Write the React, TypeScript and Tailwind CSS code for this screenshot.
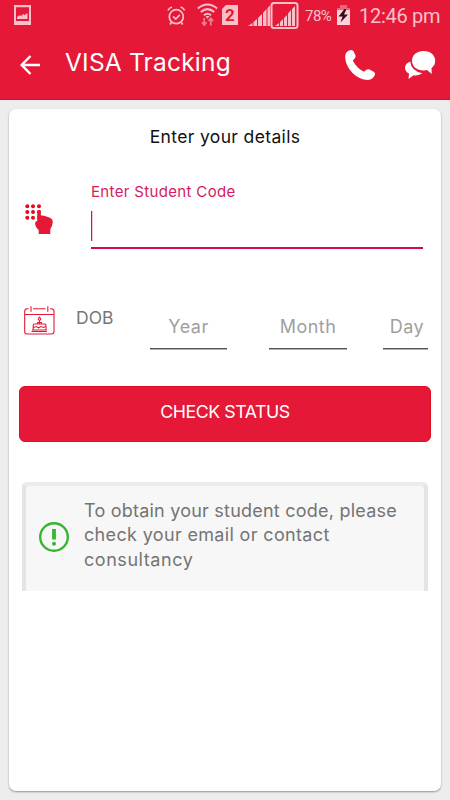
import React from "react";

function StatusBar() {
  return (
    <div className="flex h-8 items-center pl-[14px] text-[#fac0ca] font-[Roboto,sans-serif]">
      <svg className="mt-[-2px] h-5 w-[17px] shrink-0" viewBox="0 0 17 20" fill="currentColor">
        <path fillRule="evenodd" d="M0 0H17V20H0zM2 2.3V16H15V2.3z" />
        <path d="M3 14V12L5.5 10.3L7 11L9.3 9L10.5 10L13.5 8V14z" />
      </svg>
      <svg className="ml-[136px] mt-[-1px] h-[20px] w-[19px] shrink-0" viewBox="0 0 19 20" fill="none" stroke="currentColor" strokeWidth="1.7">
        <circle cx="9.3" cy="10.7" r="7" />
        <path d="M1 4.3Q2.2 1.8 5 1M17.6 4.3Q16.4 1.8 13.6 1M6 10.3L8.7 13L12.8 8.8M4.5 16L3 18.5M14.1 16L15.6 18.5" />
      </svg>
      <svg className="ml-[11px] mt-[-4px] h-[23px] w-[22px] shrink-0" viewBox="0 0 22 23" fill="none" stroke="currentColor" strokeWidth="2">
        <path d="M.8 5.5Q10.5 -2.5 20.2 5.5M3.8 9Q10.5 3.2 17.2 9M7 12.3Q10.5 9.2 14 12.3" />
        <path d="M8.5 13H12.5L10.5 15.8z" fill="currentColor" stroke="none" />
        <path stroke="#f27f90" strokeWidth="1.7" d="M7.2 15V21.5M4.8 19.3L7.2 22L9.5 19.3M13.8 22.5V15.5M11.5 18L13.8 15.3L16.2 18" />
      </svg>
      <div className="ml-[3px] mt-[-2px] flex h-[20px] w-[16px] shrink-0 items-center justify-center bg-[#fac0ca] text-[17px] font-bold leading-none text-[#e51937] [clip-path:polygon(25%_0,100%_0,100%_100%,0_100%,0_20%)]">2</div>
      <svg className="ml-[10px] mt-[-3px] h-[28px] w-[51px] shrink-0" viewBox="0 0 51 28" fill="currentColor">
        <path d="M0 25L4.5 22V25zM5.5 21L9 18V25H5.5zM10 17L14 13V25H10zM15 12L18.5 8V25H15zM19.5 7L22 4.5V25H19.5z" />
        <path d="M27 25L31 22V25zM32 21L35 18V25H32zM36 17L39 14V25H36zM40 12.5L43 9V25H40zM44 8L47 5V25H44z" />
        <rect x="23.5" y="2" width="26" height="25" rx="2.5" fill="none" stroke="currentColor" strokeWidth="2" />
      </svg>
      <span className="ml-[6px] w-[30px] whitespace-nowrap text-[15px] tracking-[-0.5px]">78%</span>
      <svg className="ml-[2px] mt-[-3px] h-[20px] w-[13px] shrink-0" viewBox="0 0 13 20">
        <path d="M3 0H10V3H13V20H0V3H3z" fill="#f0647a" />
        <path d="M0 5H13V20H0z" fill="#fbd2d9" />
        <path d="M7.5 4L1.5 11.5H5.5L3.5 17.5L11 9.5H7L9.5 4z" fill="#3d0c17" />
      </svg>
      <span className="ml-[9px] whitespace-nowrap text-[20px] tracking-[-0.28px]">12:46 pm</span>
    </div>
  );
}

function AppBar() {
  return (
    <header className="flex h-[65px] items-center pl-5 text-white">
      <svg className="h-5 w-5 shrink-0" viewBox="0 0 20 20" fill="none" stroke="currentColor" strokeWidth="2.4">
        <path d="M20 10H2M10.5 1L1.7 10L10.5 19" />
      </svg>
      <h1 className="-mt-1 ml-[25px] w-[255px] whitespace-nowrap text-[24.5px] tracking-[0.2px]">VISA Tracking</h1>
      <svg className="ml-[25px] h-[30px] w-[30px] shrink-0" viewBox="0 0 30 30" fill="currentColor">
        <path d="M1 3Q3 .2 6 0Q8 0 8.7 1.5L10.5 5.5Q11 7.5 9.2 9L7.8 10.6Q9.8 14.8 12.8 17.5Q15.6 20.3 19.2 21.7L21 19.9Q22.7 18.6 24.5 19.6L29 22Q30.5 23 29.8 25Q28 29.6 23 30Q14 29.5 7.5 23Q.4 15.5 .2 7.5Q.1 5 1 3z" />
      </svg>
      <svg className="ml-[30px] h-[28px] w-[31px] shrink-0" viewBox="0 0 31 28" fill="currentColor">
        <path d="M5.2 10.5Q6 20 17.5 22.3Q13.5 25 8.5 24.2L3.5 28L4 22.6Q0 20.5 0 16.5Q.2 12.5 5.2 10.5z" />
        <path d="M18.7 0C25.5 0 30.2 4.2 30.2 9.8Q30.2 14.1 26.5 17.1L26.7 23L22 19.1Q20.5 19.5 18.7 19.5C11.5 19.5 7 15.3 7 9.8S11.5 0 18.7 0z" />
      </svg>
    </header>
  );
}

function KeypadIcon() {
  return (
    <svg className="h-[30px] w-[28px] shrink-0" viewBox="0 0 28 30" fill="#e51937">
      {[2.3, 8, 13.8].map((y) => [2.3, 8, 14].map((x) => (
        <circle key={`${x}-${y}`} cx={x} cy={y} r="2" fill="#e30b1c" />
      )))}
      <path d="M12.3 7.2Q12.5 6 14 6T15.8 7.2V11.2L20 12.1L25.5 14Q28 15.3 27.8 18Q27.5 22 25.3 25.2V30H13.7V26.2Q10.2 23 10 19.8Q10 17.3 12.3 16.8z" />
    </svg>
  );
}

function CakeCalendarIcon() {
  return (
    <svg className="h-[29px] w-[31px] shrink-0" viewBox="0 0 31 29" fill="none" stroke="#e51937" strokeWidth="1.1">
      <path d="M4.5 2.7H3Q.7 3 .7 5.3V25.5Q.7 28 3 28H27.5Q30 28 30 25.5V5.3Q30 3 27.5 2.7H26M9 2.7H21.5M.7 8.5H30M7 .3V5.8M23.8 .3V5.8" />
      <path d="M7.5 25.5H23M9.2 24V19.5Q9.2 18 10.5 18H20.5Q22 18 22 19.5V24M9.5 21.5L12 20.5L14.5 21.8L17 20.5L19.5 21.5L21.8 20.5M8 24H22.8M15.5 18V14.5M13.7 18V16.5H17.4V18M15.5 11.2Q13 14 15.5 14.2Q18 14 15.5 11.2z" />
    </svg>
  );
}

function DateField({ label, className }: { label: string; className: string }) {
  return (
    <div className={`flex h-[43px] justify-center border-b border-[#555] pt-[9px] text-[18px] leading-6 tracking-[0.5px] text-[#a0a0a0] shadow-[0_1px_0_#b0b0b0] ${className}`}>{label}</div>
  );
}

export default function App() {
  return (
    <div className="flex h-[800px] w-[450px] flex-col overflow-hidden bg-[#ededed] font-[Inter,sans-serif]">
      <div className="h-[100px] shrink-0 border-b border-[#d80f20] bg-[#e51937]">
        <StatusBar />
        <AppBar />
      </div>
      <main className="mx-[9px] mt-[9px] h-[682px] rounded-[7px] bg-white shadow-[0_1px_2px_rgba(0,0,0,0.38)]">
        <h2 className="pt-4 text-center text-[17.5px] leading-6 tracking-[0.36px] text-[#111]">Enter your details</h2>
        <div className="mt-[21px] flex">
          <div className="ml-4 w-[66px] pt-[34px]"><KeypadIcon /></div>
          <div className="h-[79px] w-[332px] border-b-2 border-[#cf0850] pt-[10px]">
            <div className="whitespace-nowrap text-[15px] leading-6 tracking-[0.34px] text-[#d51a62]">Enter Student Code</div>
            <div className="mt-[7px] h-[30px] w-px bg-[#cf1846] shadow-[1px_0_0_#f5c6d2]" />
          </div>
        </div>
        <div className="mt-[57px] flex text-[17.5px]">
          <div className="ml-[15px] w-[52px]"><CakeCalendarIcon /></div>
          <div className="w-[74px] leading-6 text-[#777]">DOB</div>
          <DateField label="Year" className="w-[77px]" />
          <DateField label="Month" className="ml-[42px] w-[78px]" />
          <DateField label="Day" className="ml-[36px] w-[45px] pl-[3px]" />
        </div>
        <button className="ml-[10px] mt-[37px] flex h-[56px] w-[412px] justify-center rounded-[6px] border border-[#df1022] bg-[#e51937] pt-[13px] text-[17.8px] leading-6 tracking-[-0.45px] text-white">CHECK STATUS</button>
        <div className="ml-[13px] mt-[40px] flex h-[109px] w-[406px] rounded-t-[5px] border-x-[4px] border-t-[4px] border-x-[#e4e4e4] border-t-[#ececec] bg-[#e5e5e5]">
          <div className="flex w-full rounded-t-[4px] bg-[#f7f7f7]">
            <svg className="ml-[13px] mt-[36px] h-[30px] w-[30px] shrink-0" viewBox="0 0 30 30" fill="none" stroke="#36b52f" strokeWidth="2.4">
              <circle cx="15" cy="15" r="13.8" />
              <path d="M15 7V17.5" strokeWidth="3.8" />
              <circle cx="15" cy="21.7" r="2" fill="#36b52f" stroke="none" />
            </svg>
            <p className="ml-[15px] mt-[13px] whitespace-nowrap text-[18px] leading-[24.4px] text-[#747474]"><span className="tracking-[0.22px]">To obtain your student code, please</span><br /><span className="tracking-[0.34px]">check your email or contact</span><br /><span className="tracking-[0.55px]">consultancy</span></p>
          </div>
        </div>
      </main>
    </div>
  );
}
